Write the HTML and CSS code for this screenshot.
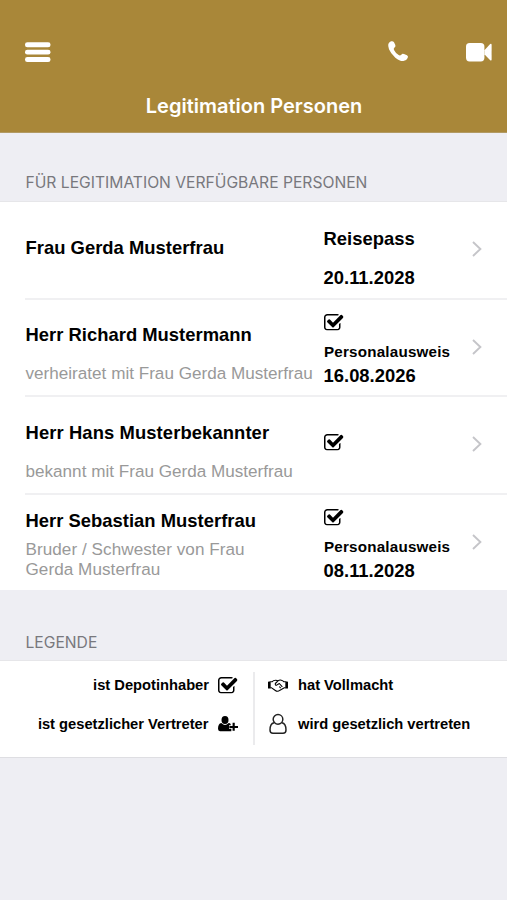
FILE: index.html
```html
<!DOCTYPE html>
<html lang="de">
<head>
<meta charset="utf-8">
<title>Legitimation Personen</title>
<link rel="stylesheet" href="styles.css">
</head>
<body>
<svg class="defs" aria-hidden="true">
  <symbol id="check" viewBox="64 128 1664 1408"><path d="M1472 930v318q0 119-84.5 203.5t-203.5 84.5h-832q-119 0-203.5-84.5t-84.5-203.5v-832q0-119 84.5-203.5t203.5-84.5h832q63 0 117 25 15 7 18 23 3 17-9 29l-49 49q-10 10-23 10-3 0-9-2-23-6-45-6h-832q-66 0-113 47t-47 113v832q0 66 47 113t113 47h832q66 0 113-47t47-113v-254q0-13 9-22l64-64q10-10 23-10 6 0 12 3 20 8 20 29zm231-489l-814 814q-24 24-57 24t-57-24l-430-430q-24-24-24-57t24-57l110-110q24-24 57-24t57 24l263 263 647-647q24-24 57-24t57 24l110 110q24 24 24 57t-24 57z"/></symbol>
  <symbol id="chevron" viewBox="0 0 10 16"><path d="M1 1l7.4 7L1 15" fill="none" stroke="currentColor" stroke-width="1.9"/></symbol>
</svg>
<header class="topbar">
  <div class="actions">
    <svg class="menu" viewBox="0 0 26 21"><rect y="0" width="26" height="5.2" rx="2.4"/><rect y="7.6" width="26" height="5" rx="2.4"/><rect y="15.2" width="26" height="5" rx="2.4"/></svg>
    <svg class="phone" viewBox="0 0 60 60"><path d="M9 1Q15-1 18 4L22 12Q24 17 19 20Q16 22 18 27Q23 37 32 42Q36 45 40 41Q43 36 48 39L57 43Q62 46 59 51Q56 59 46 60Q36 61 22 50Q8 38 3 25Q-4 6 9 1Z"/></svg>
    <svg class="video" viewBox="0 0 26 19"><rect width="18.4" height="18.4" rx="3.6"/><path d="M18.4 7.2L24.2 1.1Q25.6.2 25.6 1.8V16.6Q25.6 18.2 24.2 17.2L18.4 11.2Z"/></svg>
  </div>
  <h1>Legitimation Personen</h1>
</header>
<h2 class="section">FÜR LEGITIMATION VERFÜGBARE PERSONEN</h2>
<main class="list">
  <article class="row">
    <div class="person"><p class="name">Frau Gerda Musterfrau</p></div>
    <div class="doc spread"><p class="strong">Reisepass</p><p class="strong">20.11.2028</p></div>
    <svg class="chevron"><use href="#chevron"/></svg>
  </article>
  <article class="row">
    <div class="person lower"><p class="name">Herr Richard Mustermann</p><p class="relation">verheiratet mit Frau Gerda Musterfrau</p></div>
    <div class="doc"><svg class="check"><use href="#check"/></svg><p class="kind">Personalausweis</p><p class="strong">16.08.2026</p></div>
    <svg class="chevron"><use href="#chevron"/></svg>
  </article>
  <article class="row">
    <div class="person lower"><p class="name wide">Herr Hans Musterbekannter</p><p class="relation">bekannt mit Frau Gerda Musterfrau</p></div>
    <div class="doc single"><svg class="check"><use href="#check"/></svg></div>
    <svg class="chevron"><use href="#chevron"/></svg>
  </article>
  <article class="row">
    <div class="person compact"><p class="name">Herr Sebastian Musterfrau</p><p class="relation">Bruder / Schwester von Frau<br>Gerda Musterfrau</p></div>
    <div class="doc"><svg class="check"><use href="#check"/></svg><p class="kind">Personalausweis</p><p class="strong">08.11.2028</p></div>
    <svg class="chevron"><use href="#chevron"/></svg>
  </article>
</main>
<h2 class="section legend-title">LEGENDE</h2>
<section class="legend">
  <div class="column left">
    <div class="entry"><span>ist Depotinhaber</span><svg class="check"><use href="#check"/></svg></div>
    <div class="entry"><span>ist gesetzlicher Vertreter</span>
      <svg class="guardian" viewBox="0 0 60 46"><ellipse cx="21" cy="11" rx="10.5" ry="12"/><path d="M10 20Q16 26 21 26Q26 26 32 20Q36 20 38 23V27H33V37H40V45H6Q0 44 0 37Q0 22 10 20Z"/><path d="M47 19V43M34 32H60" stroke="#000" stroke-width="6.5"/></svg></div>
  </div>
  <div class="column right">
    <div class="entry"><svg class="hands" viewBox="0 0 60 38"><path d="M0 8L8 6V28H0ZM52 6L60 8V28H52Z"/><path d="M7 8H12Q16 3 23 3Q28 3 30 5Q34 2 40 3Q45 4 48 8H53M7 26H11L22 34Q29 39 36 33L49 26H53M30 5L22 13Q21 19 26 18L34 13L43 23M34 22L38 27" fill="none" stroke="#000" stroke-width="3.2" stroke-linejoin="round"/></svg><span>hat Vollmacht</span></div>
    <div class="entry"><svg class="user" viewBox="0 0 52 60"><path d="M14 26Q2 28 2 48Q2 58 11 58H41Q50 58 50 48Q50 28 38 26" fill="none" stroke="#222" stroke-width="4.4"/><circle cx="26" cy="16" r="14.5" fill="none" stroke="#222" stroke-width="4.4"/></svg><span>wird gesetzlich vertreten</span></div>
  </div>
</section>
</body>
</html>
```
FILE: styles.css
```css
* { box-sizing: border-box; }
body, h1, h2, p { margin: 0; }
body { width: 507px; height: 900px; overflow: hidden; background: #eeeef3; color: #000; font-family: "Liberation Sans", Arial, sans-serif; }
svg { display: block; flex: none; overflow: visible; }
.defs { width: 0; height: 0; position: absolute; }
.topbar { height: 133px; background: #a98739; color: #fff; border-bottom: 1px solid #b29a63; padding-top: 40px; }
.actions { display: flex; align-items: center; height: 25px; padding: 0 15px 0 25px; fill: #fff; }
.menu { width: 25.5px; height: 21px; }
.phone { width: 20px; height: 20px; margin-left: auto; margin-top: -3px; }
.video { width: 26px; height: 19px; margin-left: 58px; }
h1 { margin-top: 28px; padding-left: 1px; text-align: center; font: 600 20px/26px Inter, sans-serif; letter-spacing: 0; }
.section { height: 68px; padding: 40px 0 0 25.5px; font: 400 15.65px/20px Inter, sans-serif; color: #78787d; }
.list { border-top: 1px solid #e6e6e9; background: #fff; height: 389px; }
.row { display: flex; height: 97.6px; margin-left: 25px; border-bottom: 2px solid #f0f0f2; }
.row:last-child { border: 0; }
.person { width: 298.5px; padding: 35px 0 0 .5px; white-space: nowrap; }
.name, .strong { font-weight: 700; font-size: 18.4px; line-height: 22px; letter-spacing: .02px; }
.name.wide { letter-spacing: .1px; }
.person.lower { padding-top: 24.5px; }
.relation { margin-top: 18px; color: #999; font-size: 17.1px; line-height: 20px; letter-spacing: .01px; }
.person.compact { padding-top: 15.5px; }
.compact .relation { margin-top: 8px; line-height: 19.5px; letter-spacing: .06px; }
.doc { width: 148px; padding-top: 14.5px; }
.spread { padding-top: 26px; }
.spread .strong + .strong { margin-top: 17px; }
.single { padding-top: 37px; }
.check { width: 19.5px; height: 16.5px; }
.kind { margin: 12.5px 0 0 .5px; font-size: 15.2px; line-height: 18px; font-weight: 700; letter-spacing: .2px; }
.kind + .strong { margin-top: 4px; }
.chevron { width: 10px; height: 16px; margin-top: 39px; color: #c5c5c9; }
.legend-title { height: 70px; padding-top: 42.5px; }
.legend { display: flex; height: 98px; padding-top: 11px; background: #fff; border-top: 1px solid #e6e6e9; border-bottom: 1px solid #dedee2; }
.column { display: flex; flex-direction: column; height: 73px; font-size: 14.7px; font-weight: 700; }
.left { width: 255px; border-right: 2px solid #ebebed; padding-right: 15.5px; align-items: flex-end; }
.right { padding-left: 13px; }
.entry { display: flex; align-items: center; height: 26px; gap: 9px; white-space: nowrap; }
.entry + .entry { margin-top: 13px; }
.guardian { width: 20px; height: 16px; }
.hands { width: 20px; height: 13px; margin-right: 1px; }
.user { width: 18px; height: 20px; margin: -1px 2px 0 1px; }
```
